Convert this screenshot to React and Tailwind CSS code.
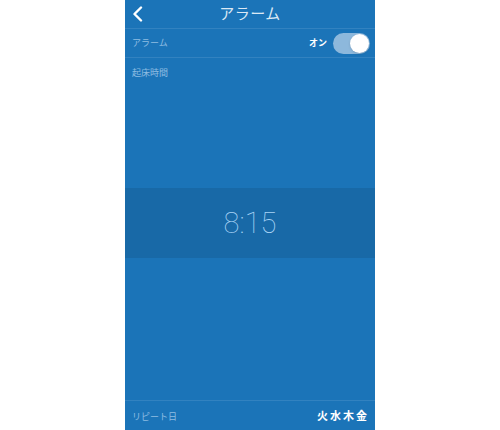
export default function App() {
  return (
    <div
      className="w-[500px] h-[430px] bg-white flex justify-center"
      style={{ fontFamily: '"Noto Sans", "Noto Sans CJK JP", sans-serif' }}
    >
      <div className="w-[250px] h-full bg-[#1b74b8] flex flex-col">
        {/* Header */}
        <div className="relative h-[29px] flex items-center justify-center border-b border-[#3282c0]">
          <svg className="absolute left-[6px] top-[6px] w-[14px] h-[16px]" viewBox="0 0 14 16" fill="none">
            <polyline points="10,1.5 3.5,8 10,14.5" stroke="#ffffff" strokeWidth="2.4" strokeLinecap="round" strokeLinejoin="round" />
          </svg>
          <span className="text-[15px] leading-none text-[#dbe9f5] tracking-[0.5px] -mt-[2px]">アラーム</span>
        </div>

        {/* Alarm toggle row */}
        <div className="h-[29px] flex items-center justify-between pl-[7px] pr-[5px] border-b border-[#3282c0]">
          <span className="text-[9px] text-[#8fbde2]">アラーム</span>
          <div className="flex items-center gap-[6px]">
            <span className="text-[9px] font-bold text-white">オン</span>
            <div className="w-[37px] h-[21px] rounded-full bg-[#8db8dc] flex items-center justify-end p-[1px]">
              <div className="w-[19px] h-[19px] rounded-full bg-white shadow" />
            </div>
          </div>
        </div>

        {/* Wake time */}
        <div className="h-[29px] flex items-center pl-[7px]">
          <span className="text-[9px] text-[#8fbde2]">起床時間</span>
        </div>
        <div className="h-[101px]" />
        <div className="h-[70px] bg-[#1869a7] flex items-center justify-center">
          <span
            className="text-[29px] text-[#a9d4f6] leading-none"
            style={{ fontFamily: 'Roboto, "Noto Sans", sans-serif', fontWeight: 100 }}
          >
            8:15
          </span>
        </div>
        <div className="flex-1" />

        {/* Repeat */}
        <div className="h-[30px] flex items-center justify-between pl-[7px] pr-[6px] pt-[2px] border-t border-[#3282c0]">
          <span className="text-[9px] text-[#8fbde2]">リピート日</span>
          <span className="text-[11px] font-bold text-white tracking-[2px]">火水木金</span>
        </div>
      </div>
    </div>
  );
}
